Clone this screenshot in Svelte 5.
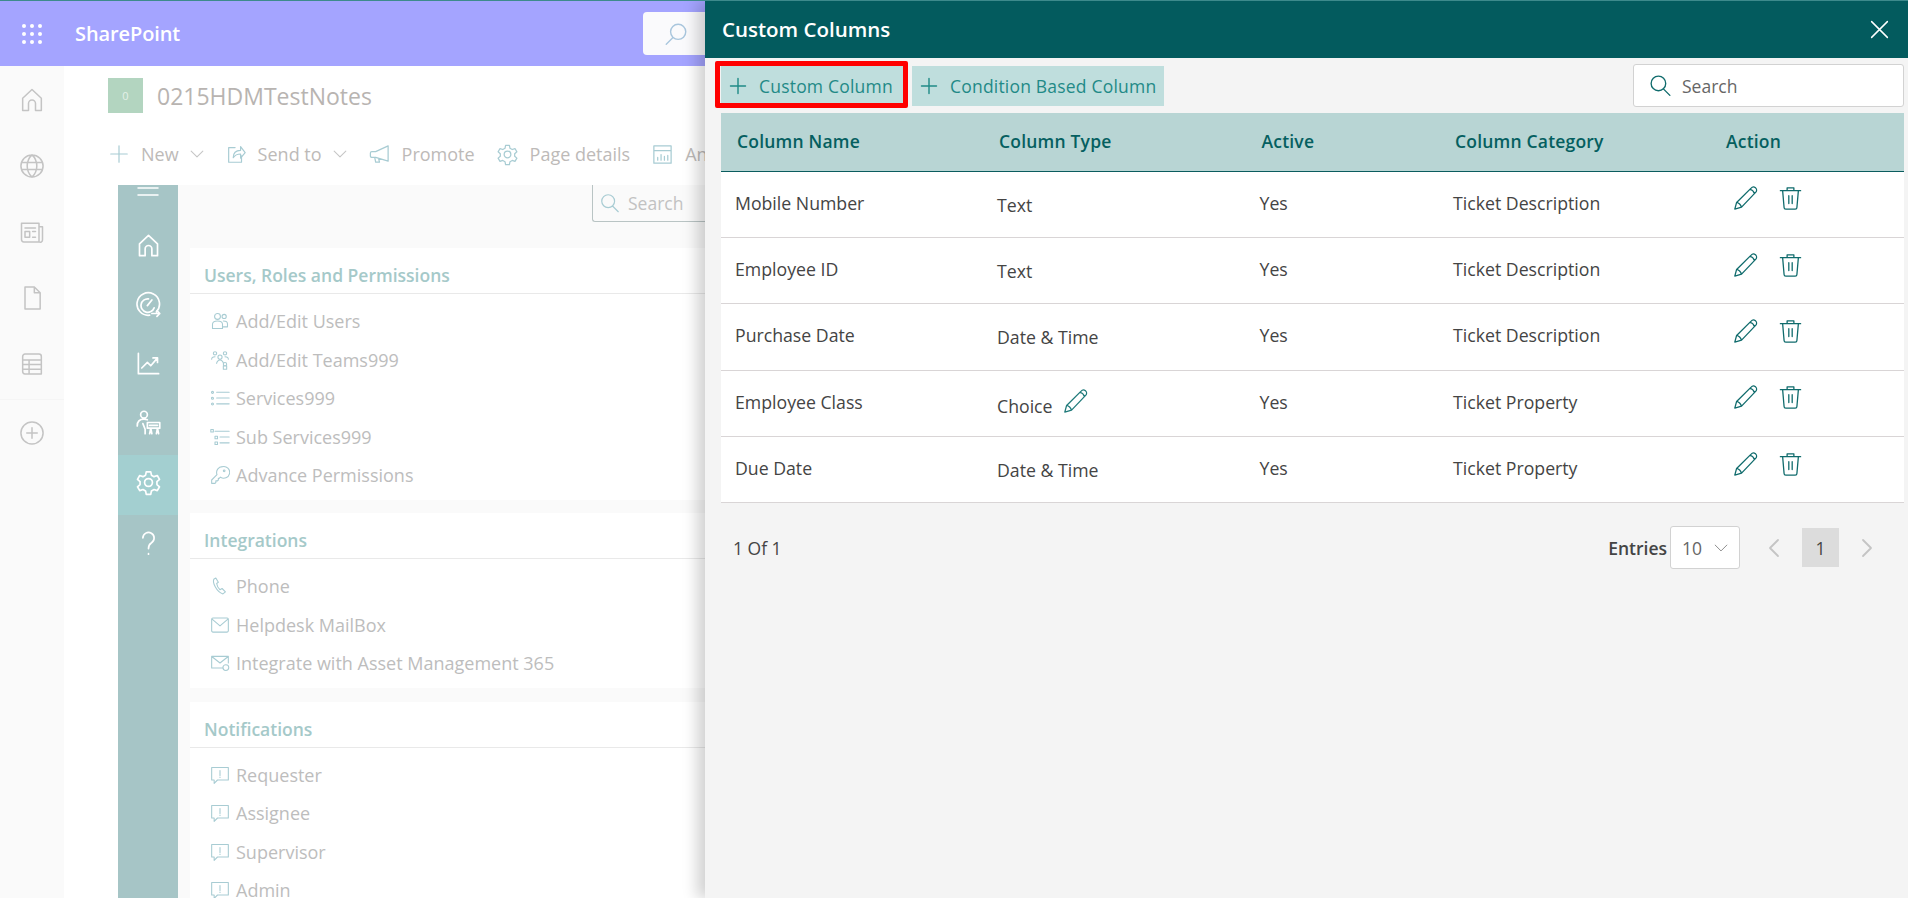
<script lang="ts">
	const icons: Record<string, string> = {
		home: 'M4 21V10.500L12 3l8 7.500V21h-5v-6a3 3 0 0 0-6 0v6z',
		globe: 'M12 2.500a9.500 9.500 0 1 0 0 19 9.500 9.500 0 0 0 0-19zM12 2.500c-5.500 5-5.500 14 0 19M12 2.500c5.500 5 5.500 14 0 19M3.500 9h17M3.500 15h17',
		news: 'M3 4.500h15v16H5a2 2 0 0 1-2-2zM18 7.500h3v11a2 2 0 0 1-3 2M6 8.500h9M6 11.500h4v5H6zM12.500 11.500H15M12.500 16.500H15',
		doc: 'M6 2.500h8l5 5v14H6zM14 2.500v5h5',
		table: 'M4 5.500a2 2 0 0 1 2-2h12a2 2 0 0 1 2 2v15H6a2 2 0 0 1-2-2zM4 8.500h16M4 12.500h16M4 16.500h16M9.500 8.500v12',
		addCircle: 'M12 2.500a9.500 9.500 0 1 0 0 19 9.500 9.500 0 0 0 0-19zM12 7.500v9M7.500 12h9',
		plus: 'M12 3v18M3 12h18',
		search: 'M10 3a7 7 0 1 0 0 14 7 7 0 0 0 0-14zM15 15.500l6 6',
		searchFlip: 'M14 3a7 7 0 1 1 0 14 7 7 0 0 1 0-14zM9 15.500l-6 6',
		chevron: 'M5 8.500l7 7 7-7',
		send: 'M11 5H4v16h14v-7M9 16c0-5 3-8 8-8V4l5 6.500-5 6V12c-3 0-6 1-8 4z',
		promote: 'M21 3v16L8 15H4a1.500 1.500 0 0 1-1.500-1.500v-3A1.500 1.500 0 0 1 4 9h4zM7 15l1 5h4l-1-4',
		gear: 'M12 8.500a3.500 3.500 0 1 0 0 7 3.500 3.500 0 0 0 0-7zM10 2.500h4l.6 3 2.300 1.300 2.900-1 2 3.400-2.300 2 0 2.600 2.300 2-2 3.400-2.900-1-2.300 1.300-.6 3h-4l-.6-3-2.300-1.300-2.900 1-2-3.400 2.300-2 0-2.600-2.300-2 2-3.400 2.900 1 2.300-1.300z',
		analytics: 'M3 3h18v18H3zM3 8h18M7 18v-3M10.500 18v-6M14 18v-4M17.500 18v-5',
		menu: 'M2 8h20M2 15h20',
		gauge: 'M19 18.500a10 10 0 1 0-6 3M12 7a6 6 0 1 0 5 8M11 13l4-5M15 20h7M19.500 17.500 22 20l-2.500 2.500',
		chart: 'M3 3v18h18M6 16l5-5 3 3 6-7M16 7h4v4',
		people: 'M8 2a3 3 0 1 0 0 6 3 3 0 0 0 0-6zM2 15c0-4 2-6 6-6 1 0 2 .2 3 .6M7 13l2 5v4M11 12h11v5H11zM13 22l1-5 1 5M19 22l1-5 1 5M13 14.500h7',
		question: 'M7 7a5 5 0 1 1 7.500 4.500c-2 1.200-2.500 2.500-2.500 5M12 21v.5',
		users: 'M9 3a3.500 3.500 0 1 0 0 7 3.500 3.500 0 0 0 0-7zM17 4a2.500 2.500 0 1 0 0 5 2.500 2.500 0 0 0 0-5zM3 21v-5c0-3 2-4 6-4s6 1 6 4v5zM16 12c3 0 5 1 5 3.500V19h-5',
		teams: 'M6 2a2 2 0 1 0 0 4 2 2 0 0 0 0-4zM18 2a2 2 0 1 0 0 4 2 2 0 0 0 0-4zM12 6a2.500 2.500 0 1 0 0 5 2.500 2.500 0 0 0 0-5zM2 11c0-2 2-3 4-3M22 11c0-2-2-3-4-3M8 16c0-2 2-4 4-4s4 2 4 4M18 15a2 2 0 1 0 0 4 2 2 0 0 0 0-4zM16 23v-4h4v4z',
		list: 'M3 4a1.200 1.200 0 1 0 0 2.400A1.200 1.200 0 0 0 3 4zM3 11a1.200 1.200 0 1 0 0 2.400A1.200 1.200 0 0 0 3 11zM3 18a1.200 1.200 0 1 0 0 2.400A1.200 1.200 0 0 0 3 18zM8 5h15M8 12h15M8 19h15',
		sublist: 'M1 3h3v3H1zM6 5h17M6 11h3v3H6zM12 12h11M6 18h3v3H6zM12 19h11',
		key: 'M15 2a7 7 0 0 0-6.600 9.500L2 18v4h4l1-1v-2h2l1-1v-2h1l1.500-1.500A7 7 0 1 0 15 2zM17 6a1 1 0 1 0 0 2 1 1 0 0 0 0-2z',
		phone: 'M7 2.500 4.500 4c-1.500 4 3 15 11 17.500l3-2.500-4-4-2.500 1.500c-2-1.500-3.500-4.500-4-7.500L10 7.500z',
		mail: 'M2 5a1.500 1.500 0 0 1 1.500-1.500h17A1.500 1.500 0 0 1 22 5v14a1.500 1.500 0 0 1-1.500 1.500h-17A1.500 1.500 0 0 1 2 19zM2.500 5 12 13l9.500-8',
		mailGear: 'M16 18H2V4h20v8M2.500 4.500 12 12l9.500-7.500M19 14a3.500 3.500 0 1 0 0 7 3.500 3.500 0 0 0 0-7z',
		note: 'M2 3h20v15H9l-4 4v-4H2zM12 6.500v6M12 14.500v.5',
		pencil: 'M2.500 21.500l1.600-6L17 2.800a2.500 2.500 0 0 1 4.200 3.500L8.500 19.700zM4.100 15.500c1.800.4 3.600 2 4.400 4.200M16 3.900c1.600.3 3.200 1.600 3.800 3.400',
		trash: 'M3 5h18M9 5V2.500h6V5M5 5l1.300 15a1.500 1.500 0 0 0 1.500 1.500h8.400a1.500 1.500 0 0 0 1.500-1.500L19 5M10.500 9.500v7M13.500 9.500v7',
		close: 'M3 3l18 18M21 3 3 21',
		back: 'M15 4l-8 8 8 8',
		next: 'M9 4l8 8-8 8'
	};

	const rail = ['home', 'globe', 'news', 'doc', 'table', 'addCircle'];

	const sideNav = [
		{ icon: 'home' },
		{ icon: 'gauge' },
		{ icon: 'chart' },
		{ icon: 'people' },
		{ icon: 'gear', active: true },
		{ icon: 'question' }
	];

	const sections = [
		{
			title: 'Users, Roles and Permissions',
			items: [
				{ icon: 'users', label: 'Add/Edit Users' },
				{ icon: 'teams', label: 'Add/Edit Teams999' },
				{ icon: 'list', label: 'Services999' },
				{ icon: 'sublist', label: 'Sub Services999' },
				{ icon: 'key', label: 'Advance Permissions' }
			]
		},
		{
			title: 'Integrations',
			items: [
				{ icon: 'phone', label: 'Phone' },
				{ icon: 'mail', label: 'Helpdesk MailBox' },
				{ icon: 'mailGear', label: 'Integrate with Asset Management 365' }
			]
		},
		{
			title: 'Notifications',
			items: [
				{ icon: 'note', label: 'Requester' },
				{ icon: 'note', label: 'Assignee' },
				{ icon: 'note', label: 'Supervisor' },
				{ icon: 'note', label: 'Admin' }
			]
		}
	];

	const rows = [
		{ name: 'Mobile Number', type: 'Text', category: 'Ticket Description' },
		{ name: 'Employee ID', type: 'Text', category: 'Ticket Description' },
		{ name: 'Purchase Date', type: 'Date & Time', category: 'Ticket Description' },
		{ name: 'Employee Class', type: 'Choice', category: 'Ticket Property', editable: true },
		{ name: 'Due Date', type: 'Date & Time', category: 'Ticket Property' }
	];
</script>

{#snippet icon(name: string, size: number, cls = '')}
	<svg class="icon {cls}" width={size} height={size} viewBox="0 0 24 24" aria-hidden="true">
		<path d={icons[name]} />
	</svg>
{/snippet}

<div class="page">
	<header class="suite-bar">
		<svg class="waffle" width="22" height="22" viewBox="0 0 22 22" aria-hidden="true">
			{#each [0, 1, 2] as r}
				{#each [0, 1, 2] as c}
					<circle cx={3 + c * 8} cy={3 + r * 8} r="2" />
				{/each}
			{/each}
		</svg>
		<span class="brand">SharePoint</span>
		<div class="suite-search">{@render icon('searchFlip', 26)}</div>
	</header>

	<div class="body">
		<nav class="rail">
			{#each rail as name, i}
				<div class="rail-item" class:split={i === 5}>{@render icon(name, 28)}</div>
			{/each}
		</nav>

		<main class="main">
			<div class="site-head">
				<div class="site-logo">0</div>
				<h1>0215HDMTestNotes</h1>
			</div>

			<div class="command-bar">
				<span class="cmd">{@render icon('plus', 22)}<span>New</span>{@render icon('chevron', 20, 'chev')}</span>
				<span class="cmd">{@render icon('send', 22)}Send to{@render icon('chevron', 20, 'chev')}</span>
				<span class="cmd">{@render icon('promote', 23)}Promote</span>
				<span class="cmd">{@render icon('gear', 23)}Page details</span>
				<span class="cmd">{@render icon('analytics', 23)}An</span>
			</div>

			<div class="app">
				<aside class="side-nav">
					<div class="burger">{@render icon('menu', 24)}</div>
					{#each sideNav as item}
						<div class="side-item" class:active={item.active}>{@render icon(item.icon, 27)}</div>
					{/each}
				</aside>

				<div class="content">
					<div class="content-search">{@render icon('search', 22)}<span>Search</span></div>
					{#each sections as section}
						<section class="card">
							<h2>{section.title}</h2>
							<ul>
								{#each section.items as item}
									<li>{@render icon(item.icon, 20)}<span>{item.label}</span></li>
								{/each}
							</ul>
						</section>
					{/each}
				</div>
			</div>
		</main>
	</div>

	<div class="panel">
		<div class="panel-head">
			<h3>Custom Columns</h3>
			<span class="close">{@render icon('close', 21)}</span>
		</div>

		<div class="toolbar">
			<div class="add-wrap">
				<button class="add first">{@render icon('plus', 20)}Custom Column</button>
				<div class="annotation"></div>
			</div>
			<button class="add">{@render icon('plus', 20)}Condition Based Column</button>
			<div class="search">{@render icon('search', 25)}<span>Search</span></div>
		</div>

		<table>
			<colgroup>
				<col style="width: 262px" />
				<col style="width: 262.5px" />
				<col style="width: 193.5px" />
				<col style="width: 271px" />
				<col style="width: 194px" />
			</colgroup>
			<thead>
				<tr>
					<th>Column Name</th>
					<th>Column Type</th>
					<th>Active</th>
					<th>Column Category</th>
					<th>Action</th>
				</tr>
			</thead>
			<tbody>
				{#each rows as row}
					<tr>
						<td>{row.name}</td>
						<td>
							<span class="type">{row.type}</span>
							{#if row.editable}{@render icon('pencil', 27, 'type-edit')}{/if}
						</td>
						<td>Yes</td>
						<td>{row.category}</td>
						<td>
							<div class="actions">
								{@render icon('pencil', 27)}
								{@render icon('trash', 27)}
							</div>
						</td>
					</tr>
				{/each}
			</tbody>
		</table>

		<div class="pager">
			<span class="count">1 Of 1</span>
			<span class="entries">Entries</span>
			<div class="select"><span>10</span>{@render icon('chevron', 20)}</div>
			{@render icon('back', 24, 'arrow first-arrow')}
			<span class="page-num">1</span>
			{@render icon('next', 24, 'arrow')}
		</div>
	</div>
</div>

<style>
	:global(body) {
		margin: 0;
		background: #fff;
		font-family: "Open Sans", "Noto Sans", sans-serif;
	}

	.page {
		position: relative;
		height: 898px;
		overflow: hidden;
		border-top: 1px solid #3d8a8c;
		box-sizing: border-box;
		color: #bbb;
	}

	.icon {
		flex: none;
		fill: none;
		stroke: currentColor;
		stroke-width: 1.3;
		stroke-linecap: round;
		stroke-linejoin: round;
	}

	/* suite bar */
	.suite-bar {
		display: flex;
		align-items: center;
		height: 65px;
		background: #a4a4ff;
		color: #fff;
	}
	.waffle {
		margin-left: 21px;
		fill: #fff;
	}
	.brand {
		margin-left: 32px;
		font-size: 20px;
		font-weight: 600;
		letter-spacing: -0.1px;
	}
	.suite-search {
		display: flex;
		align-items: center;
		justify-content: center;
		margin-left: 463px;
		width: 70px;
		height: 43px;
		border-radius: 4px;
		background: #fafafc;
		color: #a9c6dd;
	}
	.suite-search .icon {
		margin-right: 4px;
	}

	.body {
		display: flex;
	}

	/* left rail */
	.rail {
		flex: none;
		width: 64px;
		height: 832px;
		background: #fafafa;
		color: #c4c4c4;
	}
	.rail-item {
		display: flex;
		justify-content: center;
		height: 66px;
		padding-top: 20px;
		box-sizing: border-box;
	}
	.rail-item.split {
		margin-top: 3px;
		padding-top: 19px;
		border-top: 1px solid #f5f5f5;
	}

	.main {
		flex: 1;
		min-width: 0;
		padding-left: 44px;
	}

	.site-head {
		display: flex;
		align-items: center;
		gap: 14px;
		padding-top: 12px;
	}
	.site-logo {
		display: flex;
		align-items: center;
		justify-content: center;
		width: 35px;
		height: 35px;
		background: #b3d5c0;
		color: #e3f0e8;
		font-size: 11px;
	}
	h1 {
		margin: 0;
		font-size: 23px;
		font-weight: 400;
		color: #b8b4b1;
	}

	.command-bar {
		display: flex;
		align-items: center;
		height: 40px;
		margin-top: 21px;
		font-size: 18px;
		color: #bdbab8;
		white-space: nowrap;
	}
	.cmd {
		display: flex;
		align-items: center;
		gap: 11px;
		margin-right: 21px;
	}
	.cmd .icon {
		color: #a8ccd3;
	}
	.cmd .chev {
		color: #c6c6c6;
		margin: 0 -3px;
	}

	/* background app */
	.app {
		display: flex;
		margin: 11px 0 0 10px;
	}
	.side-nav {
		flex: none;
		width: 60px;
		height: 760px;
		background: #a6c5c6;
		color: #fff;
	}
	.side-nav .icon {
		stroke-width: 1.5;
	}
	.burger {
		display: flex;
		justify-content: center;
		height: 36px;
		margin-top: -5.5px;
		overflow: hidden;
	}
	.side-item {
		display: flex;
		align-items: center;
		justify-content: center;
		height: 59px;
	}
	.side-item.active {
		height: 60px;
		margin-top: 3.5px;
		padding-bottom: 6px;
		box-sizing: border-box;
		background: #a3cfd0;
	}
	.active + .side-item {
		margin-top: -1.5px;
	}
	.content {
		position: relative;
		flex: 1;
		min-width: 0;
		padding: 63px 0 0 12px;
		background: #fafafa;
	}
	.content-search {
		position: absolute;
		top: 0;
		left: 414px;
		display: flex;
		align-items: center;
		gap: 7px;
		width: 200px;
		height: 36px;
		padding-left: 6px;
		border-left: 1px solid #b9c4c4;
		border-bottom: 1px solid #b9c4c4;
		border-radius: 0 0 0 3px;
		color: #c2c2c2;
		font-size: 17.5px;
	}
	.content-search .icon {
		color: #a8ccd3;
	}
	.card {
		margin-bottom: 13.5px;
		background: #fff;
	}
	h2 {
		margin: 0;
		height: 46px;
		padding: 0 0 0 14px;
		line-height: 54px;
		box-sizing: border-box;
		border-bottom: 1px solid #e9e9e9;
		font-size: 17.5px;
		font-weight: 600;
		color: #a5c9c9;
	}
	.card ul {
		margin: 0;
		padding: 7.75px 0 5.5px 20px;
		list-style: none;
	}
	.card li {
		display: flex;
		align-items: center;
		gap: 6px;
		height: 38.5px;
		font-size: 18px;
		color: #bdbdbd;
		white-space: nowrap;
	}
	.card li .icon {
		color: #a8ccd3;
	}

	/* custom columns panel */
	.panel {
		position: absolute;
		top: 0;
		left: 705px;
		right: 0;
		bottom: 0;
		padding-left: 16px;
		box-sizing: border-box;
		background: #f4f4f4;
		box-shadow: -8px 0 14px rgba(0, 0, 0, 0.18);
	}
	.panel-head {
		display: flex;
		align-items: center;
		justify-content: space-between;
		height: 57px;
		margin-left: -16px;
		padding: 0 18px 0 17px;
		background: #035b5e;
		color: #fff;
	}
	h3 {
		margin: 0 0 2px;
		font-size: 20.5px;
		font-weight: 600;
	}
	.close {
		display: flex;
	}
	.close .icon {
		stroke-width: 1.7;
	}

	.toolbar {
		display: flex;
		align-items: flex-start;
		gap: 9px;
		height: 55px;
		padding: 8px 4px 0 0;
		box-sizing: border-box;
	}
	.add-wrap {
		position: relative;
	}
	.add {
		display: flex;
		align-items: center;
		gap: 11px;
		height: 40px;
		padding: 0 8px;
		border: 0;
		background: #bfdedd;
		color: #1f8a87;
		font: inherit;
		font-size: 17.5px;
		letter-spacing: 0.2px;
		white-space: nowrap;
	}
	.add .icon {
		stroke-width: 1.7;
		margin-left: -1px;
	}
	.add.first {
		width: 182px;
		padding-right: 0;
		box-sizing: border-box;
	}
	.annotation {
		position: absolute;
		top: -5px;
		left: -6px;
		right: -5px;
		bottom: -2px;
		border: 5px solid #f00;
		border-radius: 2px;
	}
	.search {
		display: flex;
		align-items: center;
		gap: 9px;
		width: 271px;
		height: 43px;
		margin: -2px 0 0 auto;
		padding-left: 14px;
		box-sizing: border-box;
		border: 1px solid #d2d2d2;
		border-radius: 3px;
		background: #fff;
		color: #0f6b6c;
	}
	.search span {
		font-size: 17.5px;
		color: #666;
	}

	table {
		width: 1183px;
		table-layout: fixed;
		border-collapse: collapse;
		background: #fff;
	}
	th {
		height: 58px;
		padding: 0 0 2px 16px;
		box-sizing: border-box;
		border-bottom: 1px solid #0a5c5e;
		background: #b8d5d4;
		color: #055f60;
		font-size: 17.5px;
		font-weight: 600;
		letter-spacing: 0.2px;
		text-align: left;
	}
	td {
		height: 66.4px;
		padding: 0 0 3px 14px;
		box-sizing: border-box;
		border-bottom: 1px solid #d9d5d6;
		color: #444;
		font-size: 17.7px;
	}
	.type {
		position: relative;
		top: 2px;
	}
	.actions {
		display: flex;
		gap: 17.5px;
		margin: -8px 0 0 8px;
		color: #0f6b6c;
	}
	.actions .icon {
		stroke-width: 1.15;
	}
	td :global(.type-edit) {
		margin: 0 0 0 5px;
		color: #1f7a7a;
		stroke-width: 1.15;
		vertical-align: -4px;
	}

	.pager {
		display: flex;
		align-items: center;
		height: 44px;
		margin-top: 22.5px;
		padding-right: 30px;
		font-size: 17.5px;
		color: #444;
	}
	.count {
		margin-left: 12px;
		margin-right: auto;
	}
	.entries {
		font-weight: 600;
		margin-right: 3px;
	}
	.select {
		display: flex;
		align-items: center;
		justify-content: space-between;
		width: 70px;
		height: 43px;
		padding: 0 8px 0 11px;
		box-sizing: border-box;
		border: 1px solid #d2d2d2;
		border-radius: 3px;
		background: #fff;
		color: #666;
	}
	.select .icon {
		color: #777;
		stroke-width: 1;
	}
	.pager :global(.arrow) {
		color: #c4c4c4;
		stroke-width: 1.8;
	}
	.pager :global(.first-arrow) {
		margin-left: 23px;
	}
	.page-num {
		display: flex;
		align-items: center;
		justify-content: center;
		width: 37px;
		height: 39px;
		margin: 0 15px;
		background: #dcdcdc;
		color: #444;
	}
</style>
